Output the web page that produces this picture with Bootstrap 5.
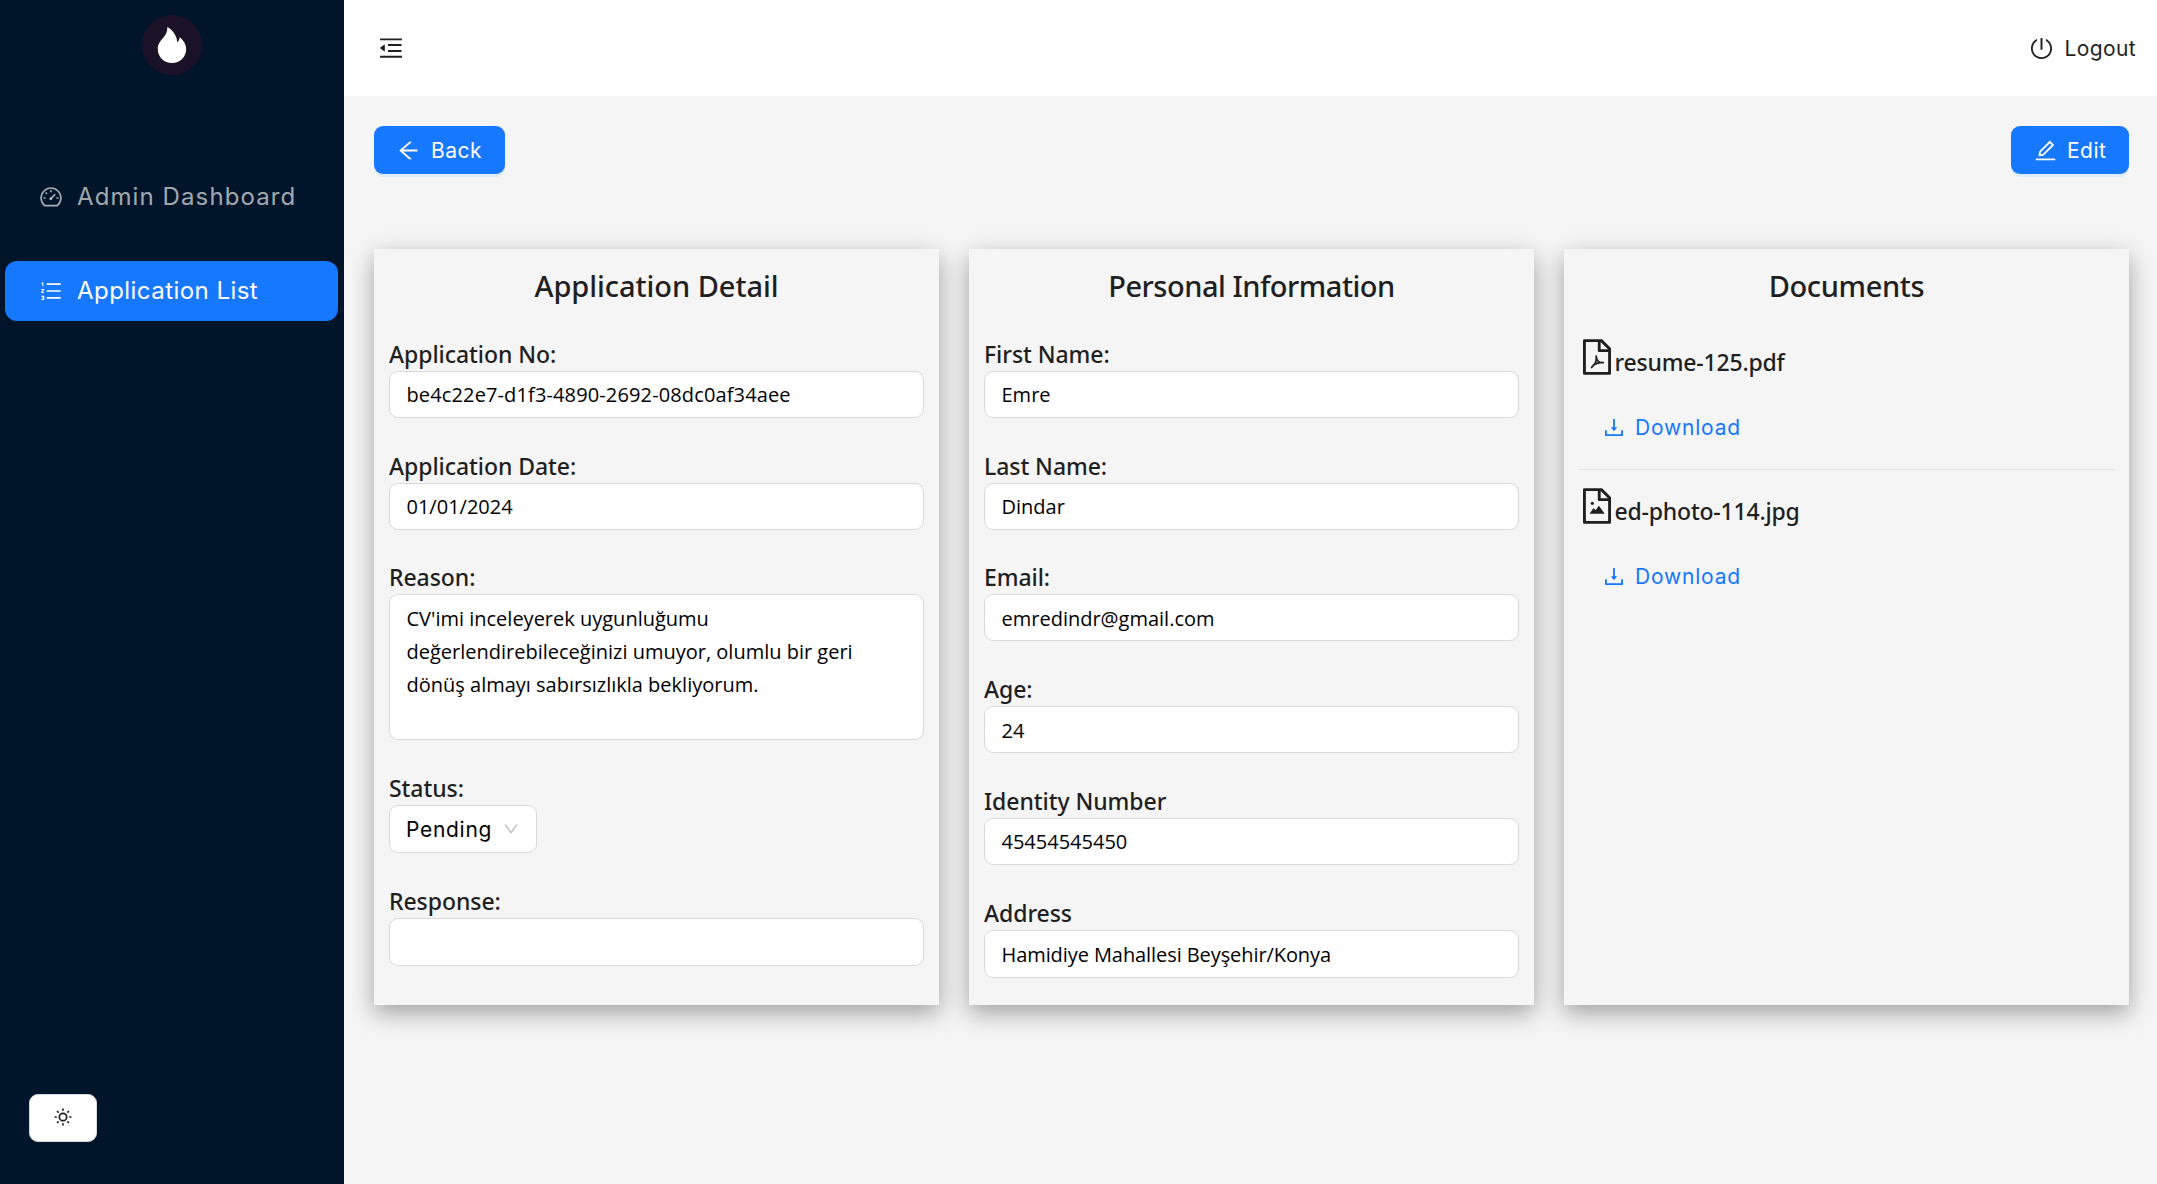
<!DOCTYPE html>
<html lang="en">
<head>
<meta charset="utf-8">
<meta name="viewport" content="width=device-width, initial-scale=1">
<title>Application Detail</title>
<link href="https://cdn.jsdelivr.net/npm/bootstrap@5.3.0/dist/css/bootstrap.min.css" rel="stylesheet">
<style>
  :root { --brand: #1677ff; --ink: #1f1f1f; }
  body { background: #f5f5f5; color: var(--ink); font-family: "Open Sans", sans-serif; overflow: hidden; }
  svg { display: block; flex: none; fill: currentColor; }
  .line-art { fill: none; stroke: currentColor; }
  .ui { font-family: Inter, sans-serif; font-size: 21px; line-height: 24px; white-space: nowrap; }
  .ui > span { padding-top: 2px; }

  .app-side { width: 344px; background: #001529; padding-top: 15px; padding-bottom: 42px; flex: none; }
  .side-menu { margin-top: 92px; gap: 34px; padding: 0 6px 0 5px; }
  .side-menu .nav-link { height: 60px; padding: 0 0 0 34px; gap: 14px; border-radius: 12px; color: rgba(255,255,255,.65); font: 24px Inter, sans-serif; letter-spacing: 1.1px; white-space: nowrap; }
  .side-menu .nav-link span { padding-bottom: 2px; }
  .side-menu .nav-link.active { background: var(--brand); color: #fff; letter-spacing: .45px; }
  .theme-btn { width: 68px; height: 48px; margin-left: 29px; padding-bottom: 3px; background: #fff; border: 1px solid #d9d9d9; border-radius: 9px; color: var(--ink); }

  .app-head { height: 96px; background: #fff; padding: 0 21px 0 33px; }
  .logout { gap: 10px; letter-spacing: .4px; }
  .app-body { padding: 30px 28px 0 30px; }
  .act-btn { height: 48px; padding: 0 0 0 22px; gap: 10px; border: 0; border-radius: 9px; background: var(--brand); color: #fff; box-shadow: 0 3px 0 rgba(5,145,255,.1); letter-spacing: .5px; }
  .act-back { width: 131px; }
  .act-edit { width: 118px; gap: 9px; }

  .panels { margin-top: 75px; gap: 30px; }
  .panel { flex: 1 1 0; height: 756px; padding: 14px 15px 0; background: #f5f5f5; box-shadow: 0 7.5px 22.5px rgba(0,0,0,.35); }
  .panel h3 { font: 500 29px/45px "Noto Sans", sans-serif; margin: 0 0 26.9px; text-align: center; }
  .t-wide { letter-spacing: -.05px; }
  .t-mid { letter-spacing: -.48px; }
  .t-tight { letter-spacing: -.35px; }
  .field { margin-bottom: 28.75px; }
  .field label, .doc-name { display: block; font: 500 23px/36px "Noto Sans", sans-serif; white-space: nowrap; }
  .field label { height: 36px; padding-top: 1px; letter-spacing: -.06px; }
  .field .form-control { height: 47px; padding: 1px 16px 0 16.5px; border: 1px solid #d9d9d9; border-radius: 9px; font: 20px "Open Sans", sans-serif; color: #000; background: #fff; }
  .field .form-control.tall { height: 48px; }
  .field textarea.form-control { height: 146px; padding: 7px 16px 7px 16.5px; line-height: 33px; resize: none; }
  .wide-no { letter-spacing: .13px; }
  .snug { letter-spacing: -.08px !important; }
  .status-box { width: 148px; height: 48px; padding: 0 16px 0 16px; border: 1px solid #d9d9d9; border-radius: 9px; background: #fff; color: #000; letter-spacing: .7px; }
  .status-box svg { color: #bfbfbf; }

  .docs { padding-top: 4px; }
  .doc { height: 131px; padding: 0 0 0 4px; border-bottom: 1px solid #e4e4e4; margin-bottom: 18px; }
  .doc + .doc { border: 0; }
  .doc-name { padding-top: 5px; margin-left: 3.5px; letter-spacing: -.2px; }
  .doc-link { margin: 34.5px 0 0 22px; gap: 12px; color: var(--brand); text-decoration: none; letter-spacing: .8px; }
</style>
</head>
<body>
<div class="d-flex vh-100">
  <aside class="app-side d-flex flex-column">
    <svg class="mx-auto" width="60" height="60" viewBox="0 0 60 60">
      <circle cx="30" cy="30" r="30" fill="#1c1228"/>
      <path fill="#fff" d="M25.3 12C31 15 35 21 35.3 27.5C36.4 26.5 37.5 24.5 37.8 22.3C41.5 25.5 44.2 29.5 44.2 34C44.2 42 38 48 30 48C22 48 15.8 42 15.8 34C15.8 24 25.8 23 25.3 12Z"/>
    </svg>
    <nav class="side-menu nav flex-column">
      <a class="nav-link d-flex align-items-center" href="#">
        <svg class="line-art" width="24" height="24" viewBox="0 0 1024 1024" stroke-width="68"><path d="M245 880A422 422 0 1 1 779 880Z" stroke-linejoin="round"/><path d="M512 216v90M282 320l58 58M190 552h90M744 552h90M500 590L690 390"/><circle cx="500" cy="590" r="28"/></svg>
        <span>Admin Dashboard</span></a>
      <a class="nav-link active d-flex align-items-center" href="#">
        <svg width="24" height="24" viewBox="0 0 1024 1024"><path d="M328 184h600v72H328zM328 476h600v72H328zM328 768h600v72H328z"/><path class="line-art" stroke-width="44" d="M100 166h62v146M96 450h102v20l-78 84v20h100M96 734h102v142H96M136 805h62"/></svg>
        <span>Application List</span></a>
    </nav>
    <button class="theme-btn mt-auto d-flex align-items-center justify-content-center" type="button" aria-label="Theme">
      <svg width="20" height="20" viewBox="0 0 20 20"><circle class="line-art" cx="10" cy="10" r="3.7" stroke-width="1.7"/><path class="line-art" stroke-width="1.7" stroke-linecap="round" d="M10 2.2v.9M10 16.9v.9M2.2 10h.9M16.9 10h.9M4.5 4.5l.6.6M14.9 14.9l.6.6M4.5 15.5l.6-.6M14.9 5.1l.6-.6"/></svg>
    </button>
  </aside>

  <div class="flex-grow-1">
    <header class="app-head d-flex align-items-center justify-content-between">
      <svg width="28" height="28" viewBox="0 0 1024 1024"><path d="M408 442h480c4.400 0 8-3.600 8-8v-56c0-4.400-3.600-8-8-8H408c-4.400 0-8 3.600-8 8v56c0 4.400 3.600 8 8 8zm-8 204c0 4.400 3.600 8 8 8h480c4.400 0 8-3.600 8-8v-56c0-4.400-3.600-8-8-8H408c-4.400 0-8 3.600-8 8v56zm504-486H120c-4.400 0-8 3.600-8 8v56c0 4.400 3.600 8 8 8h784c4.400 0 8-3.600 8-8v-56c0-4.400-3.600-8-8-8zm0 632H120c-4.400 0-8 3.600-8 8v56c0 4.400 3.600 8 8 8h784c4.400 0 8-3.600 8-8v-56c0-4.400-3.600-8-8-8zM115.400 518.900L271.700 642c5.800 4.600 14.400.5 14.400-6.900V388.900c0-7.400-8.500-11.500-14.400-6.900L115.400 505.100a8.740 8.740 0 0 0 0 13.800z"/></svg>
      <div class="logout ui d-flex align-items-center">
        <svg width="25" height="25" viewBox="0 0 1024 1024"><path d="M705.6 124.9a8 8 0 0 0-11.600 7.200v64.200c0 5.500 2.900 10.600 7.500 13.600a352.200 352.200 0 0 1 62.200 49.800c32.700 32.800 58.400 70.900 76.300 113.300a355 355 0 0 1 27.900 138.700c0 48.100-9.400 94.800-27.900 138.700a355.920 355.920 0 0 1-76.300 113.300 353.060 353.060 0 0 1-113.200 76.400c-43.800 18.600-90.500 28-138.500 28s-94.700-9.400-138.500-28a353.060 353.060 0 0 1-113.200-76.400A355.920 355.920 0 0 1 184 650.400a355 355 0 0 1-27.900-138.700c0-48.100 9.400-94.800 27.900-138.700 17.900-42.400 43.600-80.500 76.300-113.300 19-19 39.800-35.600 62.200-49.800 4.700-2.900 7.500-8.100 7.500-13.600V132c0-6-6.300-9.800-11.600-7.200C178.500 195.200 82 339.300 80 506.300 77.200 745.100 272.500 943.500 511.200 944c239 .5 432.800-193.300 432.800-432.400 0-169.200-97-315.700-238.400-386.700zM480 560h64c4.400 0 8-3.600 8-8V88c0-4.400-3.600-8-8-8h-64c-4.400 0-8 3.600-8 8v464c0 4.400 3.600 8 8 8z"/></svg>
        <span>Logout</span>
      </div>
    </header>

    <main class="app-body">
      <div class="d-flex justify-content-between">
        <button class="btn ui act-btn act-back d-flex align-items-center" type="button">
          <svg width="25" height="25" viewBox="0 0 1024 1024"><path d="M872 474H286.900l350.200-304c5.600-4.900 2.200-14-5.200-14h-88.500c-3.900 0-7.600 1.400-10.500 3.900L155 487.800a31.960 31.960 0 0 0 0 48.300L535.100 866c1.500 1.300 3.300 2 5.200 2h91.500c7.400 0 10.800-9.200 5.200-14L286.900 550H872c4.400 0 8-3.600 8-8v-60c0-4.400-3.600-8-8-8z"/></svg>
          <span>Back</span></button>
        <button class="btn ui act-btn act-edit d-flex align-items-center" type="button">
          <svg width="25" height="25" viewBox="0 0 1024 1024"><path d="M257.700 752c2 0 4-.2 6-.5L431.900 722c2-.4 3.900-1.300 5.300-2.800l423.900-423.900a9.960 9.960 0 0 0 0-14.100L694.900 114.900c-1.900-1.900-4.400-2.900-7.100-2.900s-5.200 1-7.100 2.900L256.800 538.800c-1.500 1.500-2.400 3.300-2.800 5.300l-29.500 168.200a33.500 33.500 0 0 0 9.400 29.800c6.600 6.400 14.900 9.900 23.800 9.900zm67.400-174.400L687.800 215l73.300 73.300-362.700 362.600-88.900 15.700 15.600-89zM880 836H144c-17.700 0-32 14.300-32 32v36c0 4.400 3.600 8 8 8h784c4.400 0 8-3.600 8-8v-36c0-17.700-14.300-32-32-32z"/></svg>
          <span>Edit</span></button>
      </div>

      <div class="panels d-flex">
        <section class="panel">
          <h3 class="t-wide">Application Detail</h3>
          <div class="field"><label>Application No:</label><input class="form-control wide-no" value="be4c22e7-d1f3-4890-2692-08dc0af34aee"></div>
          <div class="field"><label>Application Date:</label><input class="form-control" value="01/01/2024"></div>
          <div class="field"><label>Reason:</label><textarea class="form-control">CV'imi inceleyerek uygunluğumu
değerlendirebileceğinizi umuyor, olumlu bir geri
dönüş almayı sabırsızlıkla bekliyorum.</textarea></div>
          <div class="field"><label>Status:</label>
            <div class="status-box ui d-flex align-items-center justify-content-between"><span>Pending</span>
              <svg width="18" height="18" viewBox="0 0 1024 1024"><path d="M884 256h-75c-5.100 0-9.900 2.500-12.900 6.600L512 654.200 227.900 262.600c-3-4.100-7.800-6.600-12.900-6.600h-75c-6.500 0-10.300 7.400-6.500 12.700l352.600 486.100c12.800 17.600 39 17.600 51.700 0l352.600-486.100c3.900-5.300.1-12.700-6.400-12.700z"/></svg></div></div>
          <div class="field"><label>Response:</label><input class="form-control tall" value=""></div>
        </section>

        <section class="panel">
          <h3 class="t-mid">Personal Information</h3>
          <div class="field"><label>First Name:</label><input class="form-control" value="Emre"></div>
          <div class="field"><label>Last Name:</label><input class="form-control" value="Dindar"></div>
          <div class="field"><label>Email:</label><input class="form-control" value="emredindr@gmail.com"></div>
          <div class="field"><label>Age:</label><input class="form-control" value="24"></div>
          <div class="field"><label>Identity Number</label><input class="form-control" value="45454545450"></div>
          <div class="field"><label>Address</label><input class="form-control tall snug" value="Hamidiye Mahallesi Beyşehir/Konya"></div>
        </section>

        <section class="panel">
          <h3 class="t-tight">Documents</h3>
          <div class="docs">
          <div class="doc">
            <div class="d-flex">
              <svg width="28" height="36" viewBox="160 64 704 896"><path class="line-art" stroke-width="72" stroke-linejoin="round" d="M196 100H622L828 306V924H196ZM568 110V352H820"/><path class="line-art" stroke-width="44" stroke-linecap="round" stroke-linejoin="round" d="M490 490C515 600 465 700 375 775M490 490C500 610 570 665 670 655M420 715C490 670 540 655 620 645"/></svg>
              <span class="doc-name">resume-125.pdf</span>
            </div>
            <a class="doc-link ui d-flex align-items-center" href="#"><svg width="18" height="17" viewBox="138 160 748 704"><path d="M505.700 661a8 8 0 0 0 12.600 0l112-141.700c4.100-5.200.4-12.900-6.300-12.900h-74.100V168c0-4.400-3.600-8-8-8h-60c-4.400 0-8 3.600-8 8v338.300H400c-6.700 0-10.400 7.700-6.300 12.900l112 141.800zM878 626h-60c-4.400 0-8 3.600-8 8v154H214V634c0-4.400-3.600-8-8-8h-60c-4.400 0-8 3.600-8 8v198c0 17.700 14.300 32 32 32h684c17.700 0 32-14.300 32-32V634c0-4.400-3.600-8-8-8z"/></svg><span>Download</span></a>
          </div>
          <div class="doc">
            <div class="d-flex">
              <svg width="28" height="36" viewBox="160 64 704 896"><path class="line-art" stroke-width="72" stroke-linejoin="round" d="M196 100H622L828 306V924H196ZM568 110V352H820"/><circle cx="395" cy="445" r="40"/><path d="M325 706L425 565L475 620L560 505L705 706Z"/></svg>
              <span class="doc-name">ed-photo-114.jpg</span>
            </div>
            <a class="doc-link ui d-flex align-items-center" href="#"><svg width="18" height="17" viewBox="138 160 748 704"><path d="M505.700 661a8 8 0 0 0 12.600 0l112-141.700c4.100-5.200.4-12.900-6.300-12.900h-74.100V168c0-4.400-3.600-8-8-8h-60c-4.400 0-8 3.600-8 8v338.300H400c-6.700 0-10.400 7.700-6.300 12.900l112 141.800zM878 626h-60c-4.400 0-8 3.600-8 8v154H214V634c0-4.400-3.600-8-8-8h-60c-4.400 0-8 3.600-8 8v198c0 17.700 14.300 32 32 32h684c17.700 0 32-14.300 32-32V634c0-4.400-3.600-8-8-8z"/></svg><span>Download</span></a>
          </div>
          </div>
        </section>
      </div>
    </main>
  </div>
</div>
<script src="https://cdn.jsdelivr.net/npm/bootstrap@5.3.0/dist/js/bootstrap.bundle.min.js"></script>
</body>
</html>
